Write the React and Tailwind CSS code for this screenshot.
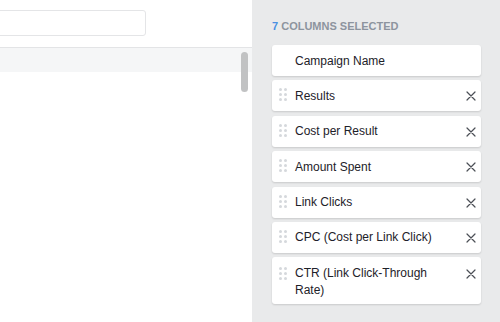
import React from "react";

const font = { fontFamily: '"Liberation Sans", Arial, sans-serif' };

function Handle() {
  return (
    <div className="grid grid-cols-2 gap-x-[2px] gap-y-[2px] w-[8px]">
      {Array.from({ length: 6 }).map((_, i) => (
        <span key={i} className="block w-[3px] h-[3px] rounded-full bg-[#d5d8dc]" />
      ))}
    </div>
  );
}

function XIcon() {
  return (
    <svg width="10" height="10" viewBox="0 0 10 10" className="block">
      <path d="M1 1 L9 9 M9 1 L1 9" stroke="#4b4f56" strokeWidth="1.2" strokeLinecap="round" />
    </svg>
  );
}

function Card({ label, removable = true, multi = false }) {
  if (multi) {
    return (
      <div className="relative bg-white rounded-[3px] shadow-[0_1px_2px_rgba(0,0,0,0.14)] pt-[8px] pb-[4.5px] pl-[23px] pr-[28px]">
        <div className="absolute left-[7px] top-[10px]">
          <Handle />
        </div>
        <div className="text-[12px] leading-[17px] text-[#1d2129]">{label}</div>
        <div className="absolute right-[5px] top-[12px]">
          <XIcon />
        </div>
      </div>
    );
  }
  return (
    <div className="relative h-[31px] bg-white rounded-[3px] shadow-[0_1px_2px_rgba(0,0,0,0.14)] flex items-center pt-[1px] pl-[23px] pr-[28px]">
      {removable && (
        <div className="absolute left-[7px] top-[8px]">
          <Handle />
        </div>
      )}
      <div className="text-[12px] leading-[17px] text-[#1d2129] whitespace-nowrap">{label}</div>
      {removable && (
        <div className="absolute right-[5px] top-[11px]">
          <XIcon />
        </div>
      )}
    </div>
  );
}

export default function App() {
  return (
    <div className="flex w-[500px] h-[322px] overflow-hidden" style={font}>
      <div className="relative w-[252px] h-full bg-white flex flex-col overflow-hidden">
        <div className="pt-[10px] h-[47px]">
          <div className="-ml-[4px] w-[150px] h-[26px] border-[1.5px] border-[#e4e5e7] rounded-[3px] bg-white" />
        </div>
        <div className="border-t border-[#e3e4e6] h-[25px] bg-[#f5f6f7]" />
        <div className="absolute left-[241px] top-[52px] w-[7px] h-[40px] rounded-[4px] bg-[#c1c2c3]" />
      </div>
      <div className="flex-1 h-full bg-[#e9eaeb] pl-[20px] pr-[19px] pt-[20px]">
        <div className="text-[11px] leading-[13px] font-bold text-[#8d949e] mb-[12px]">
          <span className="text-[#4a90e2]">7</span> COLUMNS SELECTED
        </div>
        <div className="flex flex-col gap-[4.4px]">
          <Card label="Campaign Name" removable={false} />
          <Card label="Results" />
          <Card label="Cost per Result" />
          <Card label="Amount Spent" />
          <Card label="Link Clicks" />
          <Card label="CPC (Cost per Link Click)" />
          <Card label="CTR (Link Click-Through Rate)" multi />
        </div>
      </div>
    </div>
  );
}
